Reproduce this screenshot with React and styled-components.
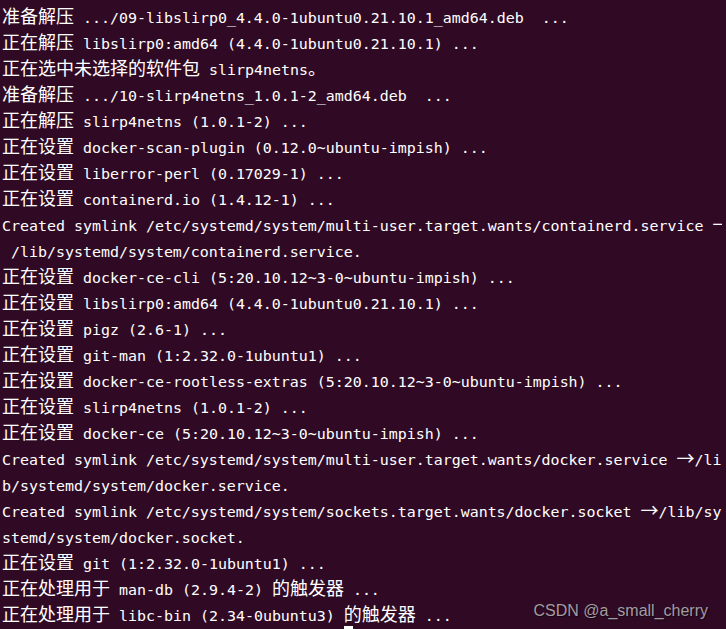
import React from 'react';
import styled, { createGlobalStyle } from 'styled-components';

const GlobalStyle = createGlobalStyle`
  html, body {
    margin: 0;
    padding: 0;
    background: #300a24;
  }
`;

const Terminal = styled.div`
  position: relative;
  width: 726px;
  height: 629px;
  overflow: hidden;
  background: #300a24;
  color: #ffffff;
  padding: 5px 0 0 2px;
  box-sizing: border-box;
  font-family: "DejaVu Sans Mono", "Liberation Mono", monospace;
  font-size: 14.95px;
`;

/* 80 columns of 9px; anything past the last column is clipped */
const Screen = styled.div`
  width: 720px;
  overflow: hidden;
`;

const Line = styled.div`
  height: 26px;
  line-height: 26px;
  white-space: pre;
`;

const Wide = styled.span`
  font-family: "Noto Sans CJK SC", "Noto Sans", sans-serif;
  font-size: 18px;
  line-height: 1;
`;

const Cursor = styled.span`
  display: inline-block;
  width: 9px;
  height: 22px;
  margin-top: -3px;
  background: #ffffff;
  vertical-align: top;
`;

const Watermark = styled.div`
  position: absolute;
  top: 603px;
  right: 18px;
  font-family: "Liberation Sans", Arial, sans-serif;
  font-size: 16px;
  line-height: 16px;
  color: #a39ca2;
  text-shadow: 1px 1px 1px rgba(0, 0, 0, 0.6);
  white-space: nowrap;
`;

const lines = [
  '准备解压 .../09-libslirp0_4.4.0-1ubuntu0.21.10.1_amd64.deb  ...',
  '正在解压 libslirp0:amd64 (4.4.0-1ubuntu0.21.10.1) ...',
  '正在选中未选择的软件包 slirp4netns。',
  '准备解压 .../10-slirp4netns_1.0.1-2_amd64.deb  ...',
  '正在解压 slirp4netns (1.0.1-2) ...',
  '正在设置 docker-scan-plugin (0.12.0~ubuntu-impish) ...',
  '正在设置 liberror-perl (0.17029-1) ...',
  '正在设置 containerd.io (1.4.12-1) ...',
  'Created symlink /etc/systemd/system/multi-user.target.wants/containerd.service →',
  ' /lib/systemd/system/containerd.service.',
  '正在设置 docker-ce-cli (5:20.10.12~3-0~ubuntu-impish) ...',
  '正在设置 libslirp0:amd64 (4.4.0-1ubuntu0.21.10.1) ...',
  '正在设置 pigz (2.6-1) ...',
  '正在设置 git-man (1:2.32.0-1ubuntu1) ...',
  '正在设置 docker-ce-rootless-extras (5:20.10.12~3-0~ubuntu-impish) ...',
  '正在设置 slirp4netns (1.0.1-2) ...',
  '正在设置 docker-ce (5:20.10.12~3-0~ubuntu-impish) ...',
  'Created symlink /etc/systemd/system/multi-user.target.wants/docker.service →/li',
  'b/systemd/system/docker.service.',
  'Created symlink /etc/systemd/system/sockets.target.wants/docker.socket →/lib/sy',
  'stemd/system/docker.socket.',
  '正在设置 git (1:2.32.0-1ubuntu1) ...',
  '正在处理用于 man-db (2.9.4-2) 的触发器 ...',
  '正在处理用于 libc-bin (2.34-0ubuntu3) 的触发器 ...',
];

const wideRe = /([\u2190-\u21ff\u3000-\u9fff\uff00-\uffef]+)/;

const renderLine = (text) =>
  text.split(wideRe).map((part, i) =>
    wideRe.test(part) ? <Wide key={i}>{part}</Wide> : part
  );

export default function App() {
  return (
    <>
      <GlobalStyle />
      <Terminal>
        <Screen>
          {lines.map((l, i) => (
            <Line key={i}>{renderLine(l)}</Line>
          ))}
          <Line>
            {' '.repeat(38)}
            <Cursor />
          </Line>
        </Screen>
        <Watermark>CSDN @a_small_cherry</Watermark>
      </Terminal>
    </>
  );
}
